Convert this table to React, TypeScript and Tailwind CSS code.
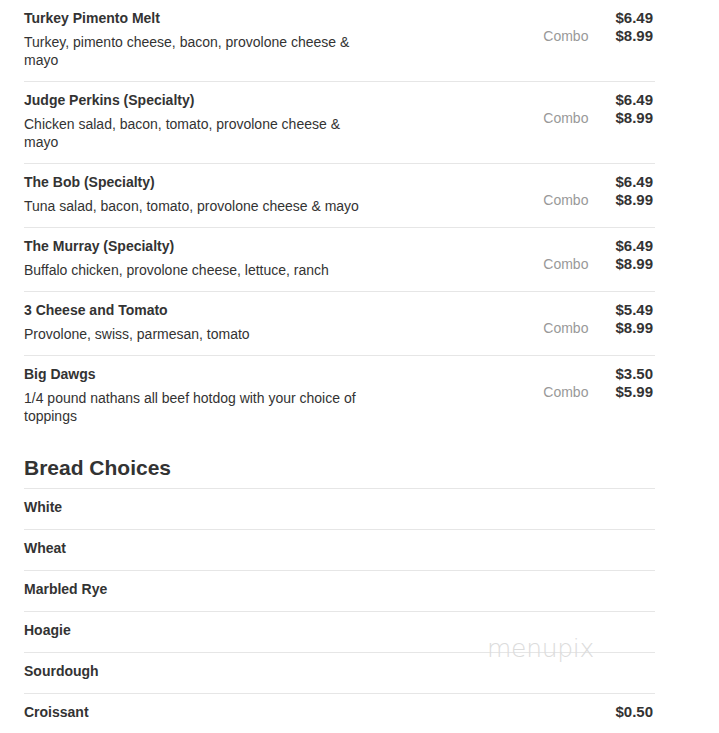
import React from "react";

type Item = { name: string; desc: string; price: string; combo: string };

const items: Item[] = [
  { name: "Turkey Pimento Melt", desc: "Turkey, pimento cheese, bacon, provolone cheese & mayo", price: "$6.49", combo: "$8.99" },
  { name: "Judge Perkins (Specialty)", desc: "Chicken salad, bacon, tomato, provolone cheese & mayo", price: "$6.49", combo: "$8.99" },
  { name: "The Bob (Specialty)", desc: "Tuna salad, bacon, tomato, provolone cheese & mayo", price: "$6.49", combo: "$8.99" },
  { name: "The Murray (Specialty)", desc: "Buffalo chicken, provolone cheese, lettuce, ranch", price: "$6.49", combo: "$8.99" },
  { name: "3 Cheese and Tomato", desc: "Provolone, swiss, parmesan, tomato", price: "$5.49", combo: "$8.99" },
  { name: "Big Dawgs", desc: "1/4 pound nathans all beef hotdog with your choice of toppings", price: "$3.50", combo: "$5.99" },
];

const breads: { name: string; price?: string }[] = [
  { name: "White" },
  { name: "Wheat" },
  { name: "Marbled Rye" },
  { name: "Hoagie" },
  { name: "Sourdough" },
  { name: "Croissant", price: "$0.50" },
];

export default function App() {
  return (
    <div
      className="relative min-h-[733px] w-[719px] bg-white text-[#333]"
      style={{ fontFamily: '"Liberation Sans", Arial, sans-serif' }}
    >
      <div className="ml-[24px] w-[631px]">
        {items.map((it, i) => (
          <div
            key={it.name}
            className={
              "flex pt-[9px] pb-[12px] " +
              (i < items.length - 1 ? "border-b border-[#e6e6e6]" : "")
            }
          >
            <div className="w-[350px]">
              <div className="text-[14px] font-bold leading-[18px]">{it.name}</div>
              <div className="mt-[6px] text-[14px] leading-[18px]">{it.desc}</div>
            </div>
            <div className="ml-auto flex gap-[27px] pr-[2px]">
              <div className="text-right text-[14px] leading-[18px] text-[#999]">
                <div className="h-[18px]" />
                <div>Combo</div>
              </div>
              <div className="text-right text-[15px] font-bold leading-[18px]">
                <div>{it.price}</div>
                <div>{it.combo}</div>
              </div>
            </div>
          </div>
        ))}

        <h2 className="mt-[19px] border-b border-[#e6e6e6] pb-[8px] text-[21px] font-bold leading-[24px]">
          Bread Choices
        </h2>
        {breads.map((b, i) => (
          <div
            key={b.name}
            className={
              "flex pt-[9px] pb-[13px] " +
              (i < breads.length - 1 ? "border-b border-[#e6e6e6]" : "")
            }
          >
            <div className="text-[14px] font-bold leading-[18px]">{b.name}</div>
            {b.price && (
              <div className="ml-auto pr-[2px] text-[15px] font-bold leading-[18px]">{b.price}</div>
            )}
          </div>
        ))}
      </div>

      <div
        className="pointer-events-none absolute left-[487px] top-[635px] text-[25px] font-extralight leading-[28px] tracking-[-0.3px] text-[#dcdcdc]"
        style={{ fontFamily: '"DejaVu Sans", sans-serif' }}
      >
        menupix
      </div>
    </div>
  );
}
